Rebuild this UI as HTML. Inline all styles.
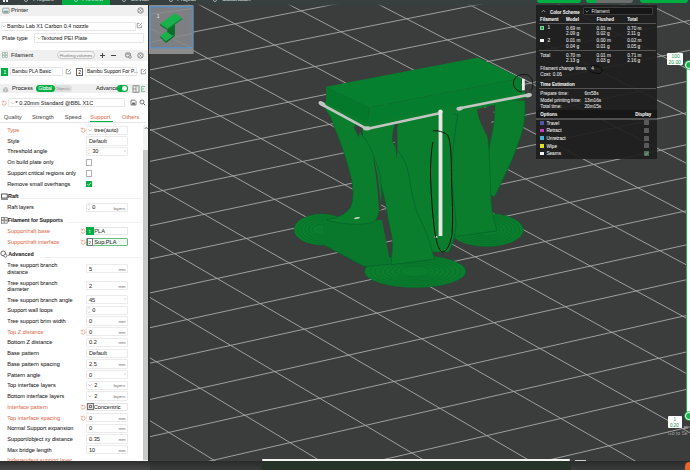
<!DOCTYPE html>
<html><head><meta charset="utf-8">
<style>
*{margin:0;padding:0;box-sizing:border-box}
html,body{width:690px;height:470px;overflow:hidden;background:#3b3c3c;font-family:"Liberation Sans",sans-serif}
.a{position:absolute;white-space:nowrap;-webkit-text-stroke:0.15px currentColor}
#vp{position:absolute;left:0;top:0}
</style></head><body>
<svg id="vp" width="690" height="470" viewBox="0 0 690 470">
<defs><linearGradient id="topg" x1="0" y1="0" x2="0" y2="1"><stop offset="0" stop-color="#3e4a4a"/><stop offset="1" stop-color="#3b3c3c"/></linearGradient></defs>
<rect x="0" y="0" width="690" height="470" fill="#3b3c3c"/>
<g stroke="#a9aaa9" stroke-width="0.9" fill="none">
<line x1="-1154.1" y1="9.5" x2="68.1" y2="883.2"/>
<line x1="-1081.3" y1="-3.5" x2="155.1" y2="860.8"/>
<line x1="-1009.3" y1="-16.3" x2="241.1" y2="838.7"/>
<line x1="-937.9" y1="-28.9" x2="325.9" y2="816.9"/>
<line x1="-867.2" y1="-41.5" x2="409.7" y2="795.3"/>
<line x1="-797.2" y1="-53.9" x2="492.5" y2="774.1"/>
<line x1="-727.9" y1="-66.3" x2="574.3" y2="753.0"/>
<line x1="-659.2" y1="-78.5" x2="655.0" y2="732.3"/>
<line x1="-591.1" y1="-90.6" x2="734.8" y2="711.8"/>
<line x1="-523.7" y1="-102.5" x2="813.6" y2="691.5"/>
<line x1="-457.0" y1="-114.4" x2="891.5" y2="671.5"/>
<line x1="-390.8" y1="-126.2" x2="968.4" y2="651.7"/>
<line x1="-325.2" y1="-137.8" x2="1044.5" y2="632.1"/>
<line x1="-260.3" y1="-149.4" x2="1119.6" y2="612.8"/>
<line x1="-195.9" y1="-160.8" x2="1193.9" y2="593.7"/>
<line x1="-132.2" y1="-172.1" x2="1267.2" y2="574.9"/>
<line x1="-69.0" y1="-183.4" x2="1339.8" y2="556.2"/>
<line x1="-6.4" y1="-194.5" x2="1411.5" y2="537.8"/>
<line x1="55.7" y1="-205.5" x2="1482.4" y2="519.5"/>
<line x1="117.2" y1="-216.4" x2="1552.5" y2="501.5"/>
<line x1="178.1" y1="-227.3" x2="1621.8" y2="483.7"/>
<line x1="238.5" y1="-238.0" x2="1690.3" y2="466.1"/>
<line x1="298.4" y1="-248.7" x2="1758.0" y2="448.7"/>
<line x1="357.8" y1="-259.2" x2="1825.0" y2="431.4"/>
<line x1="416.6" y1="-269.7" x2="1891.3" y2="414.4"/>
<line x1="474.9" y1="-280.0" x2="1956.8" y2="397.6"/>
<line x1="532.7" y1="-290.3" x2="2021.6" y2="380.9"/>
<line x1="-1154.1" y1="9.5" x2="532.7" y2="-290.3"/>
<line x1="-1124.6" y1="30.6" x2="569.9" y2="-273.6"/>
<line x1="-1094.7" y1="52.0" x2="607.5" y2="-256.6"/>
<line x1="-1064.3" y1="73.7" x2="645.6" y2="-239.4"/>
<line x1="-1033.5" y1="95.7" x2="684.2" y2="-222.0"/>
<line x1="-1002.2" y1="118.1" x2="723.4" y2="-204.4"/>
<line x1="-970.4" y1="140.8" x2="763.0" y2="-186.5"/>
<line x1="-938.1" y1="163.9" x2="803.2" y2="-168.4"/>
<line x1="-905.3" y1="187.3" x2="844.0" y2="-150.0"/>
<line x1="-872.1" y1="211.1" x2="885.3" y2="-131.4"/>
<line x1="-838.3" y1="235.3" x2="927.2" y2="-112.5"/>
<line x1="-803.9" y1="259.8" x2="969.7" y2="-93.3"/>
<line x1="-769.0" y1="284.8" x2="1012.7" y2="-73.9"/>
<line x1="-733.6" y1="310.1" x2="1056.4" y2="-54.2"/>
<line x1="-697.6" y1="335.8" x2="1100.7" y2="-34.3"/>
<line x1="-660.9" y1="362.0" x2="1145.6" y2="-14.0"/>
<line x1="-623.7" y1="388.6" x2="1191.2" y2="6.5"/>
<line x1="-585.9" y1="415.7" x2="1237.4" y2="27.4"/>
<line x1="-547.4" y1="443.2" x2="1284.3" y2="48.5"/>
<line x1="-508.3" y1="471.2" x2="1332.0" y2="70.0"/>
<line x1="-468.5" y1="499.6" x2="1380.3" y2="91.8"/>
<line x1="-428.0" y1="528.5" x2="1429.3" y2="113.9"/>
<line x1="-386.8" y1="558.0" x2="1479.1" y2="136.3"/>
<line x1="-344.9" y1="587.9" x2="1529.6" y2="159.1"/>
<line x1="-302.3" y1="618.4" x2="1580.9" y2="182.2"/>
<line x1="-258.9" y1="649.4" x2="1633.0" y2="205.7"/>
<line x1="-214.7" y1="681.0" x2="1686.0" y2="229.6"/>
<line x1="-169.7" y1="713.2" x2="1739.7" y2="253.8"/>
<line x1="-123.9" y1="745.9" x2="1794.3" y2="278.4"/>
<line x1="-77.2" y1="779.3" x2="1849.8" y2="303.4"/>
<line x1="-29.7" y1="813.3" x2="1906.1" y2="328.8"/>
<line x1="18.8" y1="847.9" x2="1963.4" y2="354.7"/>
<line x1="68.1" y1="883.2" x2="2021.6" y2="380.9"/>
</g>
<ellipse cx="486.7" cy="230" rx="36.7" ry="16.5" fill="#0a7e2d"/>
<ellipse cx="486.7" cy="230" rx="12.8" ry="5.8" fill="none" stroke="#06692a" stroke-width="0.55"/><ellipse cx="486.7" cy="230" rx="16.8" ry="7.6" fill="none" stroke="#06692a" stroke-width="0.55"/><ellipse cx="486.7" cy="230" rx="20.8" ry="9.3" fill="none" stroke="#06692a" stroke-width="0.55"/><ellipse cx="486.7" cy="230" rx="24.8" ry="11.1" fill="none" stroke="#06692a" stroke-width="0.55"/><ellipse cx="486.7" cy="230" rx="28.7" ry="12.9" fill="none" stroke="#06692a" stroke-width="0.55"/><ellipse cx="486.7" cy="230" rx="32.7" ry="14.7" fill="none" stroke="#06692a" stroke-width="0.55"/><ellipse cx="486.7" cy="230" rx="36.7" ry="16.5" fill="none" stroke="#06692a" stroke-width="0.55"/>
<ellipse cx="322" cy="229.5" rx="28" ry="15.5" fill="#0a7e2d"/>
<ellipse cx="322" cy="229.5" rx="9.8" ry="5.4" fill="none" stroke="#06692a" stroke-width="0.55"/><ellipse cx="322" cy="229.5" rx="13.4" ry="7.4" fill="none" stroke="#06692a" stroke-width="0.55"/><ellipse cx="322" cy="229.5" rx="17.1" ry="9.5" fill="none" stroke="#06692a" stroke-width="0.55"/><ellipse cx="322" cy="229.5" rx="20.7" ry="11.5" fill="none" stroke="#06692a" stroke-width="0.55"/><ellipse cx="322" cy="229.5" rx="24.4" ry="13.5" fill="none" stroke="#06692a" stroke-width="0.55"/><ellipse cx="322" cy="229.5" rx="28.0" ry="15.5" fill="none" stroke="#06692a" stroke-width="0.55"/>
<ellipse cx="415.2" cy="271.4" rx="50.5" ry="16.2" fill="#0a7e2d"/>
<ellipse cx="415.2" cy="271.4" rx="15.1" ry="4.9" fill="none" stroke="#06692a" stroke-width="0.55"/><ellipse cx="415.2" cy="271.4" rx="20.2" ry="6.5" fill="none" stroke="#06692a" stroke-width="0.55"/><ellipse cx="415.2" cy="271.4" rx="25.2" ry="8.1" fill="none" stroke="#06692a" stroke-width="0.55"/><ellipse cx="415.2" cy="271.4" rx="30.3" ry="9.7" fill="none" stroke="#06692a" stroke-width="0.55"/><ellipse cx="415.2" cy="271.4" rx="35.3" ry="11.3" fill="none" stroke="#06692a" stroke-width="0.55"/><ellipse cx="415.2" cy="271.4" rx="40.4" ry="13.0" fill="none" stroke="#06692a" stroke-width="0.55"/><ellipse cx="415.2" cy="271.4" rx="45.4" ry="14.6" fill="none" stroke="#06692a" stroke-width="0.55"/><ellipse cx="415.2" cy="271.4" rx="50.5" ry="16.2" fill="none" stroke="#06692a" stroke-width="0.55"/>
<path d="M525.0 100.5 L524.9 102.2 L524.9 103.8 L524.9 105.4 L525.0 107.1 L525.0 108.9 L525.0 110.8 L525.0 112.8 L524.9 114.9 L524.8 117.1 L524.6 119.5 L524.2 121.9 L523.8 124.4 L523.3 126.9 L522.7 129.4 L522.0 131.9 L521.3 134.4 L520.5 136.9 L519.7 139.4 L518.8 141.9 L517.9 144.3 L517.1 146.7 L516.2 149.1 L515.3 151.4 L514.5 153.6 L513.6 155.9 L512.7 158.1 L511.8 160.3 L510.8 162.5 L509.8 164.6 L508.9 166.7 L508.0 168.7 L507.0 170.7 L506.1 172.5 L505.2 174.4 L504.4 176.1 L503.6 177.8 L502.8 179.4 L502.1 181.1 L501.3 182.6 L500.6 184.2 L499.9 185.7 L499.2 187.2 L498.4 188.7 L497.7 190.2 L497.0 191.7 L496.3 193.3 L495.6 194.9 L494.8 196.4 L483.2 193.6 L483.3 191.8 L483.3 190.2 L483.3 188.5 L483.4 186.8 L483.4 185.1 L483.5 183.4 L483.5 181.7 L483.6 179.9 L483.8 178.1 L483.9 176.2 L484.1 174.2 L484.4 172.2 L484.7 170.1 L485.1 168.0 L485.5 165.8 L485.9 163.6 L486.4 161.5 L486.9 159.3 L487.3 157.1 L487.8 155.0 L488.2 152.8 L488.7 150.7 L489.1 148.6 L489.5 146.4 L489.9 144.1 L490.4 141.8 L490.8 139.4 L491.3 137.0 L491.8 134.6 L492.2 132.2 L492.6 129.9 L493.0 127.6 L493.4 125.4 L493.7 123.4 L494.0 121.4 L494.2 119.6 L494.3 118.0 L494.5 116.5 L494.6 115.0 L494.6 113.5 L494.7 112.0 L494.8 110.4 L494.8 108.8 L494.8 107.1 L494.8 105.3 L494.9 103.4 L494.9 101.4 L495.0 99.5 Z" fill="#0a7e2d" stroke="#06612a" stroke-width="0.7"/>
<path d="M482.0 103.2 L482.5 106.2 L483.0 109.1 L483.6 112.1 L484.1 115.0 L484.7 118.0 L485.2 121.1 L485.8 124.1 L486.3 127.1 L486.8 130.2 L487.2 133.3 L487.6 136.4 L488.0 139.5 L488.3 142.6 L488.6 145.7 L488.8 148.8 L489.0 151.8 L489.1 154.8 L489.2 157.7 L489.4 160.6 L489.5 163.5 L489.6 166.3 L489.7 169.1 L489.8 171.9 L490.0 174.8 L490.2 177.7 L490.3 180.8 L490.4 183.9 L490.6 187.0 L490.7 190.2 L490.8 193.3 L490.9 196.3 L491.1 199.3 L491.3 202.1 L491.5 204.8 L491.7 207.3 L492.0 209.6 L492.2 211.6 L492.6 213.5 L492.9 215.2 L493.3 216.8 L493.7 218.4 L494.1 220.0 L494.5 221.6 L494.9 223.3 L495.4 225.1 L495.9 226.9 L496.3 228.9 L496.8 230.9 L451.2 237.1 L451.1 235.3 L451.1 233.7 L451.0 232.0 L450.9 230.3 L450.8 228.5 L450.7 226.6 L450.6 224.6 L450.4 222.4 L450.3 220.1 L450.2 217.7 L450.1 215.1 L450.0 212.4 L450.0 209.6 L449.9 206.7 L449.9 203.7 L449.9 200.6 L449.8 197.4 L449.8 194.2 L449.8 191.0 L449.8 187.8 L449.8 184.6 L449.9 181.4 L449.9 178.3 L450.0 175.2 L450.1 172.2 L450.2 169.1 L450.4 166.1 L450.5 163.1 L450.7 160.2 L450.9 157.3 L451.1 154.4 L451.3 151.6 L451.5 148.8 L451.6 146.0 L451.8 143.3 L452.0 140.5 L452.2 137.7 L452.4 134.8 L452.5 131.9 L452.7 129.0 L452.9 126.0 L453.0 123.1 L453.2 120.1 L453.4 117.0 L453.5 114.0 L453.7 110.9 L453.9 107.9 L454.0 104.8 Z" fill="#0a7e2d" stroke="#06612a" stroke-width="0.7"/>
<path d="M457.6 114.5 L457.2 118.1 L456.6 121.8 L456.1 125.5 L455.6 128.9 L455.1 132.2 L454.7 135.4 L454.3 138.3 L454.0 141.0 L453.7 143.6 L453.4 145.9 L453.2 148.0 L453.0 150.0 L452.8 152.0 L452.6 154.2 L452.4 156.6 L452.2 159.1 L452.1 161.9 L452.1 164.7 L452.0 167.8 L452.1 171.0 L452.2 174.3 L452.3 177.7 L452.5 181.3 L452.6 184.8 L452.8 188.0 L453.0 191.1 L453.3 194.5 L453.6 197.9 L454.0 201.4 L454.4 204.9 L454.8 208.5 L455.2 212.0 L455.5 215.5 L455.7 219.0 L455.9 222.4 L455.9 225.7 L455.7 228.9 L455.4 231.8 L454.9 234.6 L454.4 237.1 L453.8 239.4 L453.1 241.6 L452.4 243.5 L451.7 245.4 L451.0 247.1 L450.3 248.7 L449.6 250.3 L449.0 252.1 L427.0 251.9 L426.4 249.8 L425.9 247.6 L425.4 245.6 L424.9 243.7 L424.4 242.0 L423.9 240.3 L423.3 238.7 L422.8 237.1 L422.2 235.6 L421.5 233.9 L420.9 232.2 L420.1 230.3 L419.4 228.2 L418.5 225.8 L417.5 223.1 L416.5 220.2 L415.4 217.2 L414.3 214.0 L413.2 210.6 L412.0 207.2 L410.8 203.7 L409.6 200.2 L408.5 196.6 L407.4 193.2 L406.3 190.2 L405.2 187.3 L404.0 184.3 L402.7 181.1 L401.5 177.8 L400.2 174.4 L399.0 170.8 L397.8 167.0 L396.8 163.0 L396.0 158.9 L395.4 154.5 L395.0 150.0 L394.9 145.4 L395.2 140.9 L395.6 136.6 L396.2 132.4 L397.0 128.5 L397.8 124.8 L398.7 121.2 L399.5 117.8 L400.3 114.6 L401.1 111.5 L401.8 108.6 L402.4 105.5 Z" fill="#0a7e2d" stroke="#06612a" stroke-width="0.7"/>
<path d="M396.0 115.7 L395.7 118.2 L395.3 121.0 L394.8 123.5 L394.4 126.0 L393.9 128.2 L393.4 130.4 L393.0 132.4 L392.7 134.3 L392.5 136.0 L392.4 137.6 L392.4 139.1 L392.5 140.4 L392.8 141.7 L393.3 143.0 L394.1 144.5 L395.1 146.2 L396.2 148.0 L397.5 149.9 L398.9 151.9 L400.4 154.1 L401.9 156.5 L403.4 159.0 L404.8 161.8 L406.0 164.6 L407.0 167.4 L407.7 170.0 L408.4 172.6 L408.9 175.0 L409.3 177.5 L409.7 179.8 L410.0 182.0 L410.3 184.2 L410.6 186.3 L410.9 188.2 L411.3 190.1 L411.7 191.9 L412.1 193.8 L412.6 195.8 L413.0 197.7 L413.5 199.6 L413.9 201.4 L414.4 203.1 L414.8 204.8 L415.3 206.5 L415.8 208.2 L416.3 209.8 L416.9 211.5 L417.5 213.1 L418.1 214.7 L418.8 216.3 L419.5 217.9 L420.4 219.7 L421.2 221.5 L422.1 223.4 L423.0 225.3 L424.0 227.3 L424.9 229.4 L425.8 231.5 L426.7 233.8 L427.6 236.1 L428.3 238.3 L429.1 240.5 L429.7 242.7 L430.4 244.8 L431.0 246.8 L431.6 248.8 L432.1 250.7 L432.7 252.5 L433.2 254.2 L433.7 255.9 L434.3 257.5 L434.8 259.2 L391.2 264.8 L391.3 262.8 L391.4 260.8 L391.5 258.8 L391.6 256.9 L391.8 255.1 L391.9 253.3 L392.1 251.7 L392.2 250.0 L392.3 248.4 L392.4 246.9 L392.4 245.4 L392.4 243.9 L392.4 242.5 L392.3 240.9 L392.1 239.2 L391.8 237.4 L391.5 235.6 L391.1 233.6 L390.7 231.6 L390.3 229.6 L389.9 227.5 L389.4 225.3 L388.9 223.1 L388.5 220.9 L388.1 218.8 L387.8 216.8 L387.5 214.8 L387.1 212.9 L386.8 211.0 L386.5 209.1 L386.2 207.3 L385.9 205.5 L385.5 203.7 L385.2 201.9 L384.8 200.0 L384.3 198.1 L383.9 196.0 L383.3 193.8 L382.8 191.7 L382.3 189.7 L381.8 187.7 L381.3 185.7 L380.8 183.8 L380.2 182.0 L379.7 180.2 L379.1 178.5 L378.5 176.9 L378.0 175.4 L377.5 174.0 L376.8 172.5 L376.0 170.8 L375.1 168.8 L374.0 166.7 L372.9 164.5 L371.6 162.1 L370.3 159.5 L369.0 156.8 L367.8 153.9 L366.5 150.8 L365.5 147.6 L364.6 144.4 L363.9 141.3 L363.3 138.3 L362.8 135.4 L362.4 132.6 L362.1 129.9 L361.7 127.3 L361.4 124.9 L361.1 122.6 L360.8 120.4 L360.4 118.4 L360.0 116.3 Z" fill="#0a7e2d" stroke="#06612a" stroke-width="0.7"/>
<path d="M323.0 222.0 L382.0 220.0 L390.6 264.1 L364.5 266.7 L323.0 244.5 Z" fill="#0a782c" />
<path d="M323 244.5 L364.5 266.7 L390.6 264.1" fill="none" stroke="#06612a" stroke-width="0.7"/>
<path d="M324.0 104.0 C320.8 104.0 328.8 113.0 331.0 118.0 C333.2 123.0 335.0 128.7 337.0 134.0 C339.0 139.3 341.2 144.7 343.0 150.0 C344.8 155.3 346.4 160.2 348.0 166.0 C349.6 171.8 351.8 179.3 352.5 185.0 C353.2 190.7 353.2 195.8 352.5 200.0 C351.8 204.2 350.9 207.2 348.5 210.0 C346.1 212.8 341.6 215.3 338.0 217.0 C334.4 218.7 325.0 218.8 327.0 220.0 C329.0 221.2 342.3 223.7 350.0 224.0 C357.7 224.3 368.2 224.2 373.0 222.0 C377.8 219.8 377.6 215.2 379.0 211.0 C380.4 206.8 381.3 203.0 381.5 197.0 C381.7 191.0 381.1 181.2 380.0 175.0 C378.9 168.8 376.7 164.8 375.0 160.0 C373.3 155.2 371.8 150.2 369.6 146.0 C367.4 141.8 364.3 138.3 362.0 135.0 C359.7 131.7 358.0 128.8 356.0 126.0 C354.0 123.2 355.3 121.7 350.0 118.0 C344.7 114.3 327.2 104.0 324.0 104.0 Z" fill="#0a7e2d" stroke="#06612a" stroke-width="0.7"/>
<path d="M353.6 126.2 L360.6 127.4 L358.7 137.3 Z" fill="#3b3c3c" />
<path d="M393.6 129.5 L397.2 129 C397.5 140 397.4 150 397 159.6 C395.8 150 394.6 140 393.6 129.5 Z" fill="#3b3c3c" />
<path d="M373 157 C376 165 379 180 381.5 210 L379 210 C378 190 375.5 170 373 157 Z" fill="#3b3c3c" />
<path d="M477 109 L494.8 106 C492 118 490 128 488.4 138.5 C484 130 478 120 477 109 Z" fill="#3b3c3c" />
<path d="M321.0 103.0 L364.5 129.0 L440.0 117.0 L458.0 113.0 L530.0 97.0 L521.7 90.0 L368.7 122.0 L326.0 102.0 Z" fill="#0a7e2d" />
<path d="M326.0 86.8 L368.7 107.5 L368.7 123.5 L326.0 103.0 Z" fill="#04792c" />
<path d="M368.7 107.5 L521.0 78.2 L521.7 91.5 L368.7 123.5 Z" fill="#057d2e" />
<path d="M326.0 86.8 L478.0 57.4 L521.0 78.2 L368.7 107.5 Z" fill="#05802e" />
<path d="M321 104 L364.5 127.6 Q367 128.8 370 128.2 L439.5 113.2" fill="none" stroke="#c2c6c2" stroke-width="2.6" stroke-linejoin="round" stroke-linecap="round"/>
<path d="M458.5 108.5 L529.5 94.6" fill="none" stroke="#c2c6c2" stroke-width="2.6" stroke-linecap="round"/>
<ellipse cx="322" cy="103.8" rx="3.8" ry="2.1" fill="#c2c6c2" transform="rotate(30 322 103.8)"/>
<ellipse cx="367" cy="128.3" rx="4" ry="2.1" fill="#c2c6c2" transform="rotate(-5 367 128.3)"/>
<ellipse cx="459.6" cy="108.6" rx="3.2" ry="2" fill="#c2c6c2" transform="rotate(-12 459.6 108.6)"/>
<ellipse cx="528.5" cy="95.2" rx="3.4" ry="2.1" fill="#c2c6c2" transform="rotate(-10 528.5 95.2)"/>
<rect x="438.6" y="111" width="3.8" height="125" fill="#e6e8e6"/>
<circle cx="440.5" cy="111.6" r="2.1" fill="#e6e8e6"/>
<rect x="522" y="78.8" width="2.8" height="11.5" fill="#eceeec"/>
<ellipse cx="436" cy="237" rx="1.6" ry="1" fill="#e8eae8"/>
<ellipse cx="357" cy="218" rx="3" ry="0.7" fill="#d8e8d8" transform="rotate(-12 357 218)"/>
<path d="M433 130.7 C438 130.5 443 131.5 447.5 135 C451 140 451.5 160 451.5 180 C452 200 453.5 215 452 235 C450 245 447 251 442.4 252.2 C438 250 436 240 434.5 230 C432 210 431 190 430.5 175 C430.5 160 431.5 148 433 142" fill="none" stroke="#111" stroke-width="1"/>
<path d="M530.5 91 C534 88 534 78 528 75 C522 73 514 76 513.5 82 C513 88 517 91 522 92" fill="none" stroke="#111" stroke-width="0.9"/>
</svg>
<div class="a" style="left:148.0px;top:5.0px;width:2.0px;height:456.0px;background:#2a2b2b;"></div>
<div class="a" style="left:0.0px;top:0.0px;width:690.0px;height:6.5px;background:linear-gradient(#35403f 0%, #35403f 55%, rgba(59,60,60,0) 100%);"></div>
<div class="a" style="left:62.0px;top:0.0px;width:48.2px;height:4.6px;background:#00ae42;"></div>
<div class="a" style="left:0.0px;top:5.0px;width:148.0px;height:456.0px;background:#ffffff;"></div>
<div class="a" style="left:3.0px;top:0.0px;width:2.0px;height:2.2px;background:#eeeeee;"></div>
<div class="a" style="left:6.0px;top:0.0px;width:2.0px;height:2.2px;background:#eeeeee;"></div>
<div class="a" style="left:33px;top:-3.7px;font-size:6px;line-height:6px;color:#dfe3e3;opacity:.8">Prepare</div>
<div class="a" style="left:82px;top:-3.7px;font-size:6px;line-height:6px;color:#dfe3e3;opacity:.8">Preview</div>
<div class="a" style="left:131px;top:-3.7px;font-size:6px;line-height:6px;color:#dfe3e3;opacity:.8">Device</div>
<div class="a" style="left:177px;top:-3.7px;font-size:6px;line-height:6px;color:#dfe3e3;opacity:.8">Project</div>
<div class="a" style="left:222px;top:-3.7px;font-size:6px;line-height:6px;color:#dfe3e3;opacity:.8">Calibration</div>
<div class="a" style="left:23.5px;top:-3px;width:4.5px;height:4.5px;border:0.8px solid #cfd3d3;border-radius:50%;opacity:.7"></div>
<div class="a" style="left:73.5px;top:-3px;width:4.5px;height:4.5px;border:0.8px solid #cfd3d3;border-radius:50%;opacity:.7"></div>
<div class="a" style="left:121.5px;top:-3px;width:4.5px;height:4.5px;border:0.8px solid #cfd3d3;border-radius:50%;opacity:.7"></div>
<div class="a" style="left:168.5px;top:-3px;width:4.5px;height:4.5px;border:0.8px solid #cfd3d3;border-radius:50%;opacity:.7"></div>
<div class="a" style="left:212.5px;top:-3px;width:4.5px;height:4.5px;border:0.8px solid #cfd3d3;border-radius:50%;opacity:.7"></div>
<div class="a" style="left:537.0px;top:0.0px;width:44.0px;height:3.3px;background:#00ae42;border-radius:0 0 3px 3px"></div>
<div class="a" style="left:586.0px;top:0.0px;width:10.0px;height:3.3px;background:#00ae42;border-radius:0 0 0 3px"></div>
<div class="a" style="left:596.0px;top:0.0px;width:37.0px;height:3.3px;background:#6c6e6e;border-radius:0 0 3px 0"></div>
<div class="a" style="left:640.0px;top:0.0px;width:48.0px;height:3.3px;background:#00ae42;border-radius:0 0 3px 3px"></div>
<div class="a" style="left:0.0px;top:5.0px;width:148.0px;height:10.6px;background:#f0f0f0;"></div>
<svg class="a" style="left:1.5px;top:7px" width="8" height="7" viewBox="0 0 8 7"><rect x="0.6" y="1.2" width="6.6" height="5" rx="0.8" fill="none" stroke="#8aa39a" stroke-width="0.9"/><rect x="1.5" y="3.6" width="4.8" height="2.2" fill="#8aa39a"/></svg>
<div class="a" style="left:11.0px;top:8.06px;font-size:5.8px;line-height:5.8px;color:#333;font-weight:normal;-webkit-text-stroke:0.06px #333;">Printer</div>
<svg class="a" style="left:136.5px;top:6.6px" width="7" height="7" viewBox="0 0 7 7"><circle cx="3.5" cy="3.5" r="2.7" fill="none" stroke="#6a6a6a" stroke-width="0.8"/><path d="M2.4 2.4L4.6 4.6M4.6 2.4L2.4 4.6" stroke="#6a6a6a" stroke-width="0.7"/></svg>
<div class="a" style="left:1.0px;top:21.5px;width:134.6px;height:9.1px;background:#fff;border:0.8px solid #e6e6e6;border-radius:1px;"></div>
<svg class="a" style="left:2.4px;top:24.93px" width="4.4" height="2.5" viewBox="-0.5 -0.5 4.4 2.5"><path d="M0 0L1.70 1.53L3.40 0" fill="none" stroke="#8a8a8a" stroke-width="0.6"/></svg>
<div class="a" style="left:7.0px;top:24.03px;font-size:5.45px;line-height:5.45px;color:#333;font-weight:normal;-webkit-text-stroke:0.06px #333;">Bambu Lab X1 Carbon 0.4 nozzle</div>
<svg class="a" style="left:136px;top:22px" width="7" height="7" viewBox="0 0 7 7"><path d="M5.6 3.6V5.8H1.2V1.4H3.4" fill="none" stroke="#7a7a7a" stroke-width="0.7"/><path d="M3.2 3.8L5.8 1.2" stroke="#7a7a7a" stroke-width="0.7"/></svg>
<div class="a" style="left:2.0px;top:35.66px;font-size:5.8px;line-height:5.8px;color:#333;font-weight:normal;-webkit-text-stroke:0.06px #333;">Plate type</div>
<div class="a" style="left:34.0px;top:32.6px;width:110.1px;height:10.4px;background:#fff;border:0.8px solid #e6e6e6;border-radius:1px;"></div>
<svg class="a" style="left:37.0px;top:36.73px" width="4.4" height="2.5" viewBox="-0.5 -0.5 4.4 2.5"><path d="M0 0L1.70 1.53L3.40 0" fill="none" stroke="#8a8a8a" stroke-width="0.6"/></svg>
<div class="a" style="left:41.0px;top:35.76px;font-size:5.6px;line-height:5.6px;color:#333;font-weight:normal;-webkit-text-stroke:0.06px #333;">Textured PEI Plate</div>
<div class="a" style="left:0.0px;top:49.8px;width:148.0px;height:10.9px;background:#f0f0f0;"></div>
<svg class="a" style="left:2px;top:52px" width="6" height="6" viewBox="0 0 6 6"><rect x="0.4" y="0.4" width="2.2" height="2.2" fill="none" stroke="#9ab5a8" stroke-width="0.7"/><rect x="3.4" y="0.4" width="2.2" height="2.2" fill="none" stroke="#9ab5a8" stroke-width="0.7"/><rect x="0.4" y="3.4" width="2.2" height="2.2" fill="none" stroke="#9ab5a8" stroke-width="0.7"/><rect x="3.4" y="3.4" width="2.2" height="2.2" fill="none" stroke="#9ab5a8" stroke-width="0.7"/></svg>
<div class="a" style="left:11.0px;top:52.86px;font-size:5.8px;line-height:5.8px;color:#333;font-weight:normal;-webkit-text-stroke:0.06px #333;">Filament</div>
<div class="a" style="left:57.0px;top:51.3px;width:38.0px;height:7.3px;background:#f4f4f4;border:0.8px solid #c9c9c9;border-radius:4px;"></div>
<div class="a" style="left:59.8px;top:53.67px;font-size:4.15px;line-height:4.15px;color:#8a8a8a;font-weight:normal;-webkit-text-stroke:0.06px #8a8a8a;">Flushing volumes</div>
<div class="a" style="left:99.8px;top:54.7px;width:5.0px;height:0.6px;background:#444;"></div>
<div class="a" style="left:102.0px;top:52.5px;width:0.6px;height:5.0px;background:#444;"></div>
<div class="a" style="left:111.3px;top:54.7px;width:4.5px;height:0.6px;background:#444;"></div>
<svg class="a" style="left:125px;top:51.5px" width="7" height="7" viewBox="0 0 7 7"><rect x="0.7" y="1" width="4.6" height="4" rx="0.6" fill="none" stroke="#555" stroke-width="0.7"/><path d="M1.6 2.3H4.3" stroke="#555" stroke-width="0.6"/><circle cx="5" cy="5" r="1.3" fill="#fff" stroke="#555" stroke-width="0.6"/></svg>
<svg class="a" style="left:136.5px;top:51.6px" width="7" height="7" viewBox="0 0 7 7"><circle cx="3.5" cy="3.5" r="2.7" fill="none" stroke="#6a6a6a" stroke-width="0.8"/><path d="M2.4 2.4L4.6 4.6M4.6 2.4L2.4 4.6" stroke="#6a6a6a" stroke-width="0.7"/></svg>
<div class="a" style="left:1.0px;top:67.5px;width:7.3px;height:8.1px;background:#00ae42;"></div>
<div class="a" style="left:3.4px;top:69.75px;font-size:5px;line-height:5px;color:#fff;font-weight:normal;-webkit-text-stroke:0.06px #fff;">1</div>
<div class="a" style="left:10.0px;top:67.0px;width:52.5px;height:9.0px;background:#fff;border:0.8px solid #e6e6e6;border-radius:1px;"></div>
<div class="a" style="left:12.0px;top:69.80px;font-size:4.9px;line-height:4.9px;color:#333;font-weight:normal;-webkit-text-stroke:0.06px #333;">Bambu PLA Basic</div>
<svg class="a" style="left:64.5px;top:68px" width="7" height="7" viewBox="0 0 7 7"><path d="M5.6 3.6V5.8H1.2V1.4H3.4" fill="none" stroke="#7a7a7a" stroke-width="0.7"/><path d="M3.2 3.8L5.8 1.2" stroke="#7a7a7a" stroke-width="0.7"/></svg>
<div class="a" style="left:76.0px;top:67.6px;width:7.2px;height:8.0px;background:#fff;border:0.6px solid #666;border-radius:0.5px;"></div>
<div class="a" style="left:78.3px;top:69.85px;font-size:5px;line-height:5px;color:#222;font-weight:normal;-webkit-text-stroke:0.06px #222;">2</div>
<div class="a" style="left:85.0px;top:67.0px;width:52.0px;height:9.0px;background:#fff;border:0.8px solid #e6e6e6;border-radius:1px;"></div>
<div class="a" style="left:87.0px;top:69.80px;font-size:4.9px;line-height:4.9px;color:#333;font-weight:normal;-webkit-text-stroke:0.06px #333;">Bambu Support For P...</div>
<svg class="a" style="left:139.5px;top:68px" width="7" height="7" viewBox="0 0 7 7"><path d="M5.6 3.6V5.8H1.2V1.4H3.4" fill="none" stroke="#7a7a7a" stroke-width="0.7"/><path d="M3.2 3.8L5.8 1.2" stroke="#7a7a7a" stroke-width="0.7"/></svg>
<div class="a" style="left:0.0px;top:84.0px;width:148.0px;height:9.2px;background:#f0f0f0;"></div>
<svg class="a" style="left:2px;top:85.5px" width="7" height="7" viewBox="0 0 7 7"><path d="M1 2.2L3.6 1L6.2 2.2V5.4L3.6 6.6L1 5.4Z" fill="#b8bcbb"/><path d="M1 2.2L3.6 3.4L6.2 2.2M3.6 3.4V6.6" fill="none" stroke="#f0f0f0" stroke-width="0.5"/></svg>
<div class="a" style="left:12.0px;top:86.46px;font-size:5.8px;line-height:5.8px;color:#333;font-weight:normal;-webkit-text-stroke:0.06px #333;">Process</div>
<div class="a" style="left:50.0px;top:85.0px;width:22.3px;height:7.1px;background:#dedede;border-radius:3.5px"></div>
<div class="a" style="left:35.9px;top:85.0px;width:19.0px;height:7.1px;background:#00ae42;border-radius:3.5px"></div>
<div class="a" style="left:38.6px;top:87.05px;font-size:4.6px;line-height:4.6px;color:#fff;font-weight:normal;-webkit-text-stroke:0.06px #fff;">Global</div>
<div class="a" style="left:55.3px;top:87.44px;font-size:4.2px;line-height:4.2px;color:#9a9a9a;font-weight:normal;-webkit-text-stroke:0.06px #9a9a9a;">Objects</div>
<div class="a" style="left:96.0px;top:86.31px;font-size:5.7px;line-height:5.7px;color:#333;font-weight:normal;-webkit-text-stroke:0.06px #333;">Advance</div>
<div class="a" style="left:117.0px;top:85.4px;width:11.3px;height:6.4px;background:#00ae42;border-radius:3.2px"></div>
<div class="a" style="left:122.3px;top:86.3px;width:4.8px;height:4.8px;border-radius:50%;background:#fff"></div>
<svg class="a" style="left:132px;top:85px" width="16" height="8" viewBox="0 0 16 8"><rect x="1" y="0.8" width="6" height="6.4" fill="none" stroke="#666" stroke-width="0.7"/><path d="M4 0.8V7.2M1 4H4" stroke="#666" stroke-width="0.6"/><path d="M10 1.5H13M10 4H12M10 6.5H13M9.5 1V7" stroke="#4db37a" stroke-width="0.7"/></svg>
<svg class="a" style="left:0.5px;top:99.5px" width="6" height="6" viewBox="0 0 6 6"><path d="M1.2 3.4A2 2 0 1 0 2 1.6" fill="none" stroke="#e98a73" stroke-width="0.7"/><path d="M0.6 1.2L2.2 1.4L2 3" fill="none" stroke="#e98a73" stroke-width="0.6"/></svg>
<div class="a" style="left:8.2px;top:98.1px;width:116.8px;height:9.2px;background:#fff;border:0.8px solid #e6e6e6;border-radius:1px;"></div>
<svg class="a" style="left:11.0px;top:101.73px" width="4.4" height="2.5" viewBox="-0.5 -0.5 4.4 2.5"><path d="M0 0L1.70 1.53L3.40 0" fill="none" stroke="#aaa" stroke-width="0.6"/></svg>
<div class="a" style="left:15.6px;top:100.68px;font-size:5.55px;line-height:5.55px;color:#333;font-weight:normal;-webkit-text-stroke:0.06px #333;">* 0.20mm Standard @BBL X1C</div>
<svg class="a" style="left:129.5px;top:99.3px" width="7" height="7" viewBox="0 0 7 7"><path d="M1 1.2H4.8L6 2.4V6H1Z" fill="none" stroke="#555" stroke-width="0.75"/><rect x="2.2" y="3.6" width="2.6" height="2" fill="#555"/></svg>
<svg class="a" style="left:138.5px;top:99.3px" width="7" height="7" viewBox="0 0 7 7"><circle cx="3" cy="3" r="2" fill="none" stroke="#555" stroke-width="0.8"/><path d="M4.5 4.5L6.2 6.2" stroke="#555" stroke-width="0.9"/></svg>
<div class="a" style="left:3.8px;top:115.18px;font-size:5.75px;line-height:5.75px;color:#555;font-weight:normal;-webkit-text-stroke:0.06px #555;">Quality</div>
<div class="a" style="left:32.0px;top:115.18px;font-size:5.75px;line-height:5.75px;color:#555;font-weight:normal;-webkit-text-stroke:0.06px #555;">Strength</div>
<div class="a" style="left:64.8px;top:115.18px;font-size:5.75px;line-height:5.75px;color:#555;font-weight:normal;-webkit-text-stroke:0.06px #555;">Speed</div>
<div class="a" style="left:90.3px;top:115.18px;font-size:5.75px;line-height:5.75px;color:#dc7a5c;font-weight:normal;-webkit-text-stroke:0.06px #dc7a5c;">Support</div>
<div class="a" style="left:122.0px;top:115.18px;font-size:5.75px;line-height:5.75px;color:#dc7a5c;font-weight:normal;-webkit-text-stroke:0.06px #dc7a5c;">Others</div>
<div class="a" style="left:0.0px;top:122.4px;width:146.0px;height:0.8px;background:#e6e6e6;"></div>
<div class="a" style="left:90.0px;top:121.0px;width:22.5px;height:1.2px;background:#00ae42;"></div>
<div class="a" style="left:143.0px;top:125.0px;width:4.5px;height:336.0px;background:#f2f2f2;"></div>
<div class="a" style="left:143.0px;top:150.0px;width:4.6px;height:310.0px;background:#c9c9c9;"></div>
<svg class="a" style="left:143.6px;top:126.53px" width="4.4" height="2.5" viewBox="-0.5 -0.5 4.4 2.5"><path d="M0 1.53L1.70 0L3.40 1.53" fill="none" stroke="#333" stroke-width="0.7"/></svg>
<div class="a" style="left:7.2px;top:128.16px;font-size:5.6px;line-height:5.6px;color:#dc7a5c;font-weight:normal;-webkit-text-stroke:0.06px #dc7a5c;">Type</div><svg class="a" style="left:79.5px;top:127.19999999999999px" width="6" height="6" viewBox="0 0 6 6"><path d="M1.2 3.4A2 2 0 1 0 2 1.6" fill="none" stroke="#e98a73" stroke-width="0.7"/><path d="M0.6 1.2L2.2 1.4L2 3" fill="none" stroke="#e98a73" stroke-width="0.6"/></svg><div class="a" style="left:85.9px;top:125.5px;width:42.6px;height:9.4px;background:#fff;border:0.8px solid #ebebeb;border-radius:1px;"></div><svg class="a" style="left:88.2px;top:129.28px" width="4.2" height="2.4" viewBox="-0.5 -0.5 4.2 2.4"><path d="M0 0L1.60 1.44L3.20 0" fill="none" stroke="#999" stroke-width="0.6"/></svg><div class="a" style="left:94.2px;top:128.16px;font-size:5.6px;line-height:5.6px;color:#333;font-weight:normal;-webkit-text-stroke:0.06px #333;">tree(auto)</div>
<div class="a" style="left:7.2px;top:138.96px;font-size:5.6px;line-height:5.6px;color:#2a2a2a;font-weight:normal;-webkit-text-stroke:0.06px #2a2a2a;">Style</div><div class="a" style="left:85.9px;top:136.3px;width:42.6px;height:9.4px;background:#fff;border:0.8px solid #ebebeb;border-radius:1px;"></div><div class="a" style="left:89.0px;top:138.96px;font-size:5.6px;line-height:5.6px;color:#333;font-weight:normal;-webkit-text-stroke:0.06px #333;">Default</div>
<div class="a" style="left:7.2px;top:149.46px;font-size:5.6px;line-height:5.6px;color:#2a2a2a;font-weight:normal;-webkit-text-stroke:0.06px #2a2a2a;">Threshold angle</div><div class="a" style="left:85.9px;top:146.8px;width:42.6px;height:9.4px;background:#fff;border:0.8px solid #ebebeb;border-radius:1px;"></div><svg class="a" style="left:87.4px;top:148.57px" width="3.8" height="2.3" viewBox="-0.5 -0.5 3.8 2.3"><path d="M0 1.26L1.40 0L2.80 1.26" fill="none" stroke="#aaa" stroke-width="0.5"/></svg><svg class="a" style="left:87.4px;top:152.27px" width="3.8" height="2.3" viewBox="-0.5 -0.5 3.8 2.3"><path d="M0 0L1.40 1.26L2.80 0" fill="none" stroke="#aaa" stroke-width="0.5"/></svg><div class="a" style="left:92.2px;top:149.46px;font-size:5.6px;line-height:5.6px;color:#333;font-weight:normal;-webkit-text-stroke:0.06px #333;">30</div><div class="a" style="left:124.0px;top:149.54px;font-size:4.2px;line-height:4.2px;color:#888;font-weight:normal;-webkit-text-stroke:0.06px #888;">°</div>
<div class="a" style="left:7.2px;top:160.36px;font-size:5.6px;line-height:5.6px;color:#2a2a2a;font-weight:normal;-webkit-text-stroke:0.06px #2a2a2a;">On build plate only</div><div class="a" style="left:85.9px;top:159.3px;width:6.4px;height:6.4px;background:#fff;border:0.7px solid #b0b0b0;border-radius:0.6px;"></div>
<div class="a" style="left:7.2px;top:171.26px;font-size:5.6px;line-height:5.6px;color:#2a2a2a;font-weight:normal;-webkit-text-stroke:0.06px #2a2a2a;">Support critical regions only</div><div class="a" style="left:85.9px;top:170.2px;width:6.4px;height:6.4px;background:#fff;border:0.7px solid #b0b0b0;border-radius:0.6px;"></div>
<div class="a" style="left:7.2px;top:181.96px;font-size:5.6px;line-height:5.6px;color:#2a2a2a;font-weight:normal;-webkit-text-stroke:0.06px #2a2a2a;">Remove small overhangs</div><div class="a" style="left:85.9px;top:180.9px;width:6.4px;height:6.4px;background:#00ae42;border-radius:0.6px"></div><svg class="a" style="left:86px;top:181px" width="6" height="6" viewBox="0 0 6 6"><path d="M1.3 3.1L2.6 4.4L4.9 1.8" fill="none" stroke="#fff" stroke-width="0.8"/></svg>
<svg class="a" style="left:0.5px;top:192.6px" width="7" height="7" viewBox="0 0 7 7"><rect x="0.6" y="1" width="5.6" height="4" fill="none" stroke="#333" stroke-width="0.8"/><path d="M0 6.2H7" stroke="#333" stroke-width="0.8"/></svg>
<div class="a" style="left:8.0px;top:194.25px;font-size:5.4px;line-height:5.4px;color:#222;font-weight:bold;-webkit-text-stroke:0.06px #222;">Raft</div>
<div class="a" style="left:20.0px;top:198.3px;width:122.0px;height:0.5px;background:#f0f0f0;"></div>
<div class="a" style="left:7.2px;top:205.36px;font-size:5.6px;line-height:5.6px;color:#2a2a2a;font-weight:normal;-webkit-text-stroke:0.06px #2a2a2a;">Raft layers</div><div class="a" style="left:85.9px;top:202.7px;width:42.6px;height:9.4px;background:#fff;border:0.8px solid #ebebeb;border-radius:1px;"></div><svg class="a" style="left:87.4px;top:204.47px" width="3.8" height="2.3" viewBox="-0.5 -0.5 3.8 2.3"><path d="M0 1.26L1.40 0L2.80 1.26" fill="none" stroke="#aaa" stroke-width="0.5"/></svg><svg class="a" style="left:87.4px;top:208.17px" width="3.8" height="2.3" viewBox="-0.5 -0.5 3.8 2.3"><path d="M0 0L1.40 1.26L2.80 0" fill="none" stroke="#aaa" stroke-width="0.5"/></svg><div class="a" style="left:92.2px;top:205.36px;font-size:5.6px;line-height:5.6px;color:#333;font-weight:normal;-webkit-text-stroke:0.06px #333;">0</div><div class="a" style="left:113.4px;top:206.54px;font-size:4.4px;line-height:4.4px;color:#8a8a8a;font-weight:normal;-webkit-text-stroke:0.06px #8a8a8a;">layers</div>
<svg class="a" style="left:0.5px;top:216.8px" width="7" height="7" viewBox="0 0 7 7"><rect x="0.6" y="0.6" width="2.4" height="2.4" fill="none" stroke="#555" stroke-width="0.6"/><rect x="3.8" y="0.6" width="2.4" height="2.4" fill="none" stroke="#555" stroke-width="0.6"/><rect x="0.6" y="3.8" width="2.4" height="2.4" fill="none" stroke="#555" stroke-width="0.6"/><rect x="3.8" y="3.8" width="2.4" height="2.4" fill="none" stroke="#555" stroke-width="0.6"/></svg>
<div class="a" style="left:7.8px;top:218.00px;font-size:5.3px;line-height:5.3px;color:#222;font-weight:bold;-webkit-text-stroke:0.06px #222;">Filament for Supports</div>
<div class="a" style="left:66.0px;top:222.0px;width:76.0px;height:0.5px;background:#f2f2f2;"></div>
<div class="a" style="left:7.2px;top:228.96px;font-size:5.6px;line-height:5.6px;color:#dc7a5c;font-weight:normal;-webkit-text-stroke:0.06px #dc7a5c;">Support/raft base</div>
<svg class="a" style="left:79.5px;top:228px" width="6" height="6" viewBox="0 0 6 6"><path d="M1.2 3.4A2 2 0 1 0 2 1.6" fill="none" stroke="#e98a73" stroke-width="0.7"/><path d="M0.6 1.2L2.2 1.4L2 3" fill="none" stroke="#e98a73" stroke-width="0.6"/></svg>
<div class="a" style="left:85.9px;top:226.8px;width:42.6px;height:8.4px;background:#fff;border:0.8px solid #e6e6e6;border-radius:1px;"></div>
<div class="a" style="left:86.4px;top:227.3px;width:7.2px;height:7.4px;background:#00ae42;"></div>
<div class="a" style="left:88.6px;top:229.64px;font-size:4.2px;line-height:4.2px;color:#cfe;font-weight:normal;-webkit-text-stroke:0.06px #cfe;">1</div>
<div class="a" style="left:94.3px;top:228.96px;font-size:5.6px;line-height:5.6px;color:#333;font-weight:normal;-webkit-text-stroke:0.06px #333;">PLA</div>
<div class="a" style="left:7.2px;top:239.96px;font-size:5.6px;line-height:5.6px;color:#dc7a5c;font-weight:normal;-webkit-text-stroke:0.06px #dc7a5c;">Support/raft interface</div>
<svg class="a" style="left:79.5px;top:239px" width="6" height="6" viewBox="0 0 6 6"><path d="M1.2 3.4A2 2 0 1 0 2 1.6" fill="none" stroke="#e98a73" stroke-width="0.7"/><path d="M0.6 1.2L2.2 1.4L2 3" fill="none" stroke="#e98a73" stroke-width="0.6"/></svg>
<div class="a" style="left:85.9px;top:237.6px;width:42.6px;height:8.8px;background:#eef7f0;border:0.8px solid #6abf85;border-radius:1px;"></div>
<div class="a" style="left:86.6px;top:238.4px;width:6.8px;height:7.2px;background:#fff;border:0.8px solid #777;border-radius:0.3px;"></div>
<div class="a" style="left:88.6px;top:240.64px;font-size:4.2px;line-height:4.2px;color:#222;font-weight:normal;-webkit-text-stroke:0.06px #222;">2</div>
<div class="a" style="left:94.3px;top:239.96px;font-size:5.6px;line-height:5.6px;color:#333;font-weight:normal;-webkit-text-stroke:0.06px #333;">Sup.PLA</div>
<svg class="a" style="left:0.3px;top:250.4px" width="8" height="8" viewBox="0 0 8 8"><circle cx="3.2" cy="3.4" r="2.4" fill="none" stroke="#444" stroke-width="0.8"/><circle cx="5.4" cy="5.6" r="1.6" fill="#fff" stroke="#444" stroke-width="0.7"/></svg>
<div class="a" style="left:8.3px;top:252.20px;font-size:5.3px;line-height:5.3px;color:#222;font-weight:bold;-webkit-text-stroke:0.06px #222;">Advanced</div>
<div class="a" style="left:40.0px;top:256.5px;width:102.0px;height:0.5px;background:#f2f2f2;"></div>
<div class="a" style="left:7.2px;top:263.16px;font-size:5.6px;line-height:5.6px;color:#2a2a2a;font-weight:normal;-webkit-text-stroke:0.06px #2a2a2a;">Tree support branch</div>
<div class="a" style="left:7.2px;top:269.66px;font-size:5.6px;line-height:5.6px;color:#2a2a2a;font-weight:normal;-webkit-text-stroke:0.06px #2a2a2a;">distance</div>
<div class="a" style="left:85.9px;top:263.9px;width:42.6px;height:9.4px;background:#fff;border:0.8px solid #ebebeb;border-radius:1px;"></div><div class="a" style="left:89.0px;top:266.56px;font-size:5.6px;line-height:5.6px;color:#333;font-weight:normal;-webkit-text-stroke:0.06px #333;">5</div><div class="a" style="left:118.4px;top:267.79px;font-size:4.3px;line-height:4.3px;color:#8a8a8a;font-weight:normal;-webkit-text-stroke:0.06px #8a8a8a;">mm</div>
<div class="a" style="left:7.2px;top:280.56px;font-size:5.6px;line-height:5.6px;color:#2a2a2a;font-weight:normal;-webkit-text-stroke:0.06px #2a2a2a;">Tree support branch</div>
<div class="a" style="left:7.2px;top:286.96px;font-size:5.6px;line-height:5.6px;color:#2a2a2a;font-weight:normal;-webkit-text-stroke:0.06px #2a2a2a;">diameter</div>
<div class="a" style="left:85.9px;top:281.1px;width:42.6px;height:9.4px;background:#fff;border:0.8px solid #ebebeb;border-radius:1px;"></div><div class="a" style="left:89.0px;top:283.76px;font-size:5.6px;line-height:5.6px;color:#333;font-weight:normal;-webkit-text-stroke:0.06px #333;">2</div><div class="a" style="left:118.4px;top:284.99px;font-size:4.3px;line-height:4.3px;color:#8a8a8a;font-weight:normal;-webkit-text-stroke:0.06px #8a8a8a;">mm</div>
<div class="a" style="left:7.2px;top:297.56px;font-size:5.6px;line-height:5.6px;color:#2a2a2a;font-weight:normal;-webkit-text-stroke:0.06px #2a2a2a;">Tree support branch angle</div><div class="a" style="left:85.9px;top:294.9px;width:42.6px;height:9.4px;background:#fff;border:0.8px solid #ebebeb;border-radius:1px;"></div><div class="a" style="left:89.0px;top:297.56px;font-size:5.6px;line-height:5.6px;color:#333;font-weight:normal;-webkit-text-stroke:0.06px #333;">45</div><div class="a" style="left:124.0px;top:297.64px;font-size:4.2px;line-height:4.2px;color:#888;font-weight:normal;-webkit-text-stroke:0.06px #888;">°</div>
<div class="a" style="left:7.2px;top:308.26px;font-size:5.6px;line-height:5.6px;color:#2a2a2a;font-weight:normal;-webkit-text-stroke:0.06px #2a2a2a;">Support wall loops</div><div class="a" style="left:85.9px;top:305.6px;width:42.6px;height:9.4px;background:#fff;border:0.8px solid #ebebeb;border-radius:1px;"></div><svg class="a" style="left:87.4px;top:307.37px" width="3.8" height="2.3" viewBox="-0.5 -0.5 3.8 2.3"><path d="M0 1.26L1.40 0L2.80 1.26" fill="none" stroke="#aaa" stroke-width="0.5"/></svg><svg class="a" style="left:87.4px;top:311.07px" width="3.8" height="2.3" viewBox="-0.5 -0.5 3.8 2.3"><path d="M0 0L1.40 1.26L2.80 0" fill="none" stroke="#aaa" stroke-width="0.5"/></svg><div class="a" style="left:92.2px;top:308.26px;font-size:5.6px;line-height:5.6px;color:#333;font-weight:normal;-webkit-text-stroke:0.06px #333;">0</div>
<div class="a" style="left:7.2px;top:318.96px;font-size:5.6px;line-height:5.6px;color:#2a2a2a;font-weight:normal;-webkit-text-stroke:0.06px #2a2a2a;">Tree support brim width</div><div class="a" style="left:85.9px;top:316.3px;width:42.6px;height:9.4px;background:#fff;border:0.8px solid #ebebeb;border-radius:1px;"></div><div class="a" style="left:89.0px;top:318.96px;font-size:5.6px;line-height:5.6px;color:#333;font-weight:normal;-webkit-text-stroke:0.06px #333;">0</div><div class="a" style="left:118.4px;top:320.19px;font-size:4.3px;line-height:4.3px;color:#8a8a8a;font-weight:normal;-webkit-text-stroke:0.06px #8a8a8a;">mm</div>
<div class="a" style="left:7.2px;top:329.56px;font-size:5.6px;line-height:5.6px;color:#dc7a5c;font-weight:normal;-webkit-text-stroke:0.06px #dc7a5c;">Top Z distance</div><svg class="a" style="left:79.5px;top:328.6px" width="6" height="6" viewBox="0 0 6 6"><path d="M1.2 3.4A2 2 0 1 0 2 1.6" fill="none" stroke="#e98a73" stroke-width="0.7"/><path d="M0.6 1.2L2.2 1.4L2 3" fill="none" stroke="#e98a73" stroke-width="0.6"/></svg><div class="a" style="left:85.9px;top:326.9px;width:42.6px;height:9.4px;background:#fff;border:0.8px solid #ebebeb;border-radius:1px;"></div><div class="a" style="left:89.0px;top:329.56px;font-size:5.6px;line-height:5.6px;color:#333;font-weight:normal;-webkit-text-stroke:0.06px #333;">0</div><div class="a" style="left:118.4px;top:330.79px;font-size:4.3px;line-height:4.3px;color:#8a8a8a;font-weight:normal;-webkit-text-stroke:0.06px #8a8a8a;">mm</div>
<div class="a" style="left:7.2px;top:340.16px;font-size:5.6px;line-height:5.6px;color:#2a2a2a;font-weight:normal;-webkit-text-stroke:0.06px #2a2a2a;">Bottom Z distance</div><div class="a" style="left:85.9px;top:337.5px;width:42.6px;height:9.4px;background:#fff;border:0.8px solid #ebebeb;border-radius:1px;"></div><div class="a" style="left:89.0px;top:340.16px;font-size:5.6px;line-height:5.6px;color:#333;font-weight:normal;-webkit-text-stroke:0.06px #333;">0.2</div><div class="a" style="left:118.4px;top:341.39px;font-size:4.3px;line-height:4.3px;color:#8a8a8a;font-weight:normal;-webkit-text-stroke:0.06px #8a8a8a;">mm</div>
<div class="a" style="left:7.2px;top:351.46px;font-size:5.6px;line-height:5.6px;color:#2a2a2a;font-weight:normal;-webkit-text-stroke:0.06px #2a2a2a;">Base pattern</div><div class="a" style="left:85.9px;top:348.8px;width:42.6px;height:9.4px;background:#fff;border:0.8px solid #ebebeb;border-radius:1px;"></div><div class="a" style="left:89.0px;top:351.46px;font-size:5.6px;line-height:5.6px;color:#333;font-weight:normal;-webkit-text-stroke:0.06px #333;">Default</div>
<div class="a" style="left:7.2px;top:361.96px;font-size:5.6px;line-height:5.6px;color:#2a2a2a;font-weight:normal;-webkit-text-stroke:0.06px #2a2a2a;">Base pattern spacing</div><div class="a" style="left:85.9px;top:359.3px;width:42.6px;height:9.4px;background:#fff;border:0.8px solid #ebebeb;border-radius:1px;"></div><div class="a" style="left:89.0px;top:361.96px;font-size:5.6px;line-height:5.6px;color:#333;font-weight:normal;-webkit-text-stroke:0.06px #333;">2.5</div><div class="a" style="left:118.4px;top:363.19px;font-size:4.3px;line-height:4.3px;color:#8a8a8a;font-weight:normal;-webkit-text-stroke:0.06px #8a8a8a;">mm</div>
<div class="a" style="left:7.2px;top:372.56px;font-size:5.6px;line-height:5.6px;color:#2a2a2a;font-weight:normal;-webkit-text-stroke:0.06px #2a2a2a;">Pattern angle</div><div class="a" style="left:85.9px;top:369.9px;width:42.6px;height:9.4px;background:#fff;border:0.8px solid #ebebeb;border-radius:1px;"></div><div class="a" style="left:89.0px;top:372.56px;font-size:5.6px;line-height:5.6px;color:#333;font-weight:normal;-webkit-text-stroke:0.06px #333;">0</div><div class="a" style="left:124.0px;top:372.64px;font-size:4.2px;line-height:4.2px;color:#888;font-weight:normal;-webkit-text-stroke:0.06px #888;">°</div>
<div class="a" style="left:7.2px;top:383.16px;font-size:5.6px;line-height:5.6px;color:#2a2a2a;font-weight:normal;-webkit-text-stroke:0.06px #2a2a2a;">Top interface layers</div><div class="a" style="left:85.9px;top:380.5px;width:42.6px;height:9.4px;background:#fff;border:0.8px solid #ebebeb;border-radius:1px;"></div><svg class="a" style="left:88.2px;top:384.28px" width="4.2" height="2.4" viewBox="-0.5 -0.5 4.2 2.4"><path d="M0 0L1.60 1.44L3.20 0" fill="none" stroke="#999" stroke-width="0.6"/></svg><div class="a" style="left:94.2px;top:383.16px;font-size:5.6px;line-height:5.6px;color:#333;font-weight:normal;-webkit-text-stroke:0.06px #333;">2</div><div class="a" style="left:113.4px;top:384.34px;font-size:4.4px;line-height:4.4px;color:#8a8a8a;font-weight:normal;-webkit-text-stroke:0.06px #8a8a8a;">layers</div>
<div class="a" style="left:7.2px;top:393.96px;font-size:5.6px;line-height:5.6px;color:#2a2a2a;font-weight:normal;-webkit-text-stroke:0.06px #2a2a2a;">Bottom interface layers</div><div class="a" style="left:85.9px;top:391.3px;width:42.6px;height:9.4px;background:#fff;border:0.8px solid #ebebeb;border-radius:1px;"></div><svg class="a" style="left:88.2px;top:395.08px" width="4.2" height="2.4" viewBox="-0.5 -0.5 4.2 2.4"><path d="M0 0L1.60 1.44L3.20 0" fill="none" stroke="#999" stroke-width="0.6"/></svg><div class="a" style="left:94.2px;top:393.96px;font-size:5.6px;line-height:5.6px;color:#333;font-weight:normal;-webkit-text-stroke:0.06px #333;">2</div><div class="a" style="left:113.4px;top:395.14px;font-size:4.4px;line-height:4.4px;color:#8a8a8a;font-weight:normal;-webkit-text-stroke:0.06px #8a8a8a;">layers</div>
<div class="a" style="left:7.2px;top:404.96px;font-size:5.6px;line-height:5.6px;color:#dc7a5c;font-weight:normal;-webkit-text-stroke:0.06px #dc7a5c;">Interface pattern</div>
<svg class="a" style="left:79.5px;top:404px" width="6" height="6" viewBox="0 0 6 6"><path d="M1.2 3.4A2 2 0 1 0 2 1.6" fill="none" stroke="#e98a73" stroke-width="0.7"/><path d="M0.6 1.2L2.2 1.4L2 3" fill="none" stroke="#e98a73" stroke-width="0.6"/></svg>
<div class="a" style="left:85.9px;top:402.6px;width:42.6px;height:8.8px;background:#fff;border:0.8px solid #e6e6e6;border-radius:1px;"></div>
<svg class="a" style="left:86.6px;top:403.3px" width="7" height="7" viewBox="0 0 7 7"><rect x="0" y="0" width="7" height="7" fill="#777"/><rect x="1" y="1" width="5" height="5" fill="#ddd"/><rect x="2" y="2" width="3" height="3" fill="#777"/><rect x="3" y="3" width="1" height="1" fill="#ddd"/></svg>
<div class="a" style="left:93.8px;top:404.96px;font-size:5.6px;line-height:5.6px;color:#333;font-weight:normal;-webkit-text-stroke:0.06px #333;">Concentric</div>
<div class="a" style="left:7.2px;top:415.56px;font-size:5.6px;line-height:5.6px;color:#dc7a5c;font-weight:normal;-webkit-text-stroke:0.06px #dc7a5c;">Top interface spacing</div><svg class="a" style="left:79.5px;top:414.6px" width="6" height="6" viewBox="0 0 6 6"><path d="M1.2 3.4A2 2 0 1 0 2 1.6" fill="none" stroke="#e98a73" stroke-width="0.7"/><path d="M0.6 1.2L2.2 1.4L2 3" fill="none" stroke="#e98a73" stroke-width="0.6"/></svg><div class="a" style="left:85.9px;top:412.9px;width:42.6px;height:9.4px;background:#fff;border:0.8px solid #ebebeb;border-radius:1px;"></div><div class="a" style="left:89.0px;top:415.56px;font-size:5.6px;line-height:5.6px;color:#333;font-weight:normal;-webkit-text-stroke:0.06px #333;">0</div><div class="a" style="left:118.4px;top:416.79px;font-size:4.3px;line-height:4.3px;color:#8a8a8a;font-weight:normal;-webkit-text-stroke:0.06px #8a8a8a;">mm</div>
<div class="a" style="left:7.2px;top:426.26px;font-size:5.6px;line-height:5.6px;color:#2a2a2a;font-weight:normal;-webkit-text-stroke:0.06px #2a2a2a;">Normal Support expansion</div><div class="a" style="left:85.9px;top:423.6px;width:42.6px;height:9.4px;background:#fff;border:0.8px solid #ebebeb;border-radius:1px;"></div><div class="a" style="left:89.0px;top:426.26px;font-size:5.6px;line-height:5.6px;color:#333;font-weight:normal;-webkit-text-stroke:0.06px #333;">0</div><div class="a" style="left:118.4px;top:427.49px;font-size:4.3px;line-height:4.3px;color:#8a8a8a;font-weight:normal;-webkit-text-stroke:0.06px #8a8a8a;">mm</div>
<div class="a" style="left:7.2px;top:436.96px;font-size:5.6px;line-height:5.6px;color:#2a2a2a;font-weight:normal;-webkit-text-stroke:0.06px #2a2a2a;">Support/object xy distance</div><div class="a" style="left:85.9px;top:434.3px;width:42.6px;height:9.4px;background:#fff;border:0.8px solid #ebebeb;border-radius:1px;"></div><div class="a" style="left:89.0px;top:436.96px;font-size:5.6px;line-height:5.6px;color:#333;font-weight:normal;-webkit-text-stroke:0.06px #333;">0.35</div><div class="a" style="left:118.4px;top:438.19px;font-size:4.3px;line-height:4.3px;color:#8a8a8a;font-weight:normal;-webkit-text-stroke:0.06px #8a8a8a;">mm</div>
<div class="a" style="left:7.2px;top:447.76px;font-size:5.6px;line-height:5.6px;color:#2a2a2a;font-weight:normal;-webkit-text-stroke:0.06px #2a2a2a;">Max bridge length</div><div class="a" style="left:85.9px;top:445.1px;width:42.6px;height:9.4px;background:#fff;border:0.8px solid #ebebeb;border-radius:1px;"></div><div class="a" style="left:89.0px;top:447.76px;font-size:5.6px;line-height:5.6px;color:#333;font-weight:normal;-webkit-text-stroke:0.06px #333;">10</div><div class="a" style="left:118.4px;top:448.99px;font-size:4.3px;line-height:4.3px;color:#8a8a8a;font-weight:normal;-webkit-text-stroke:0.06px #8a8a8a;">mm</div>
<div class="a" style="left:7.2px;top:458.26px;font-size:5.6px;line-height:5.6px;color:#dc7a5c;font-weight:normal;-webkit-text-stroke:0.06px #dc7a5c;">Independent support layer</div>
<div class="a" style="left:0.0px;top:461.0px;width:690.0px;height:9.0px;background:linear-gradient(#2a2b2b, #3a3b3b);"></div>
<div class="a" style="left:0.0px;top:461.0px;width:150.0px;height:9.0px;background:linear-gradient(#2e2e2e, #4a4a4a);"></div>
<div class="a" style="left:262.0px;top:461.0px;width:308.5px;height:9.0px;background:#253329;"></div>
<div class="a" style="left:261.7px;top:459.0px;width:308.7px;height:2.2px;background:#f4f6f4;border-radius:1px"></div>
<div class="a" style="left:574.8px;top:459.6px;width:10.8px;height:1.2px;background:#cfd3d0;"></div>
<div class="a" style="left:685px;top:462px;width:8px;height:9px;border-radius:50% 50% 0 0;background:#e8622c"></div>
<div class="a" style="left:536.0px;top:5.2px;width:121.2px;height:153.4px;background:rgba(30,30,30,0.93);"></div>
<div class="a" style="left:582.8px;top:7.4px;width:70.7px;height:7.2px;background:rgba(22,22,22,0.95);border:0.6px solid #3c3c3c;border-radius:1px"></div>
<svg class="a" style="left:540.8px;top:8.6px" width="5" height="4" viewBox="0 0 5 4"><path d="M0.6 3.2L2.5 1.2L4.4 3.2" fill="none" stroke="#bbb" stroke-width="0.7"/></svg>
<div class="a" style="left:549.7px;top:9.55px;font-size:5px;line-height:5px;color:#f4f4f4;font-weight:bold;-webkit-text-stroke:0.05px #f4f4f4;transform:scaleX(0.88);transform-origin:0 0">Color Scheme</div>
<svg class="a" style="left:584.6px;top:9.8px" width="4" height="3" viewBox="0 0 4 3"><path d="M0.4 0.6L2 2.2L3.6 0.6" fill="none" stroke="#ccc" stroke-width="0.6"/></svg>
<div class="a" style="left:591.5px;top:9.90px;font-size:4.7px;line-height:4.7px;color:#dddddd;font-weight:normal;-webkit-text-stroke:0.05px #dddddd;">Filament</div>
<div class="a" style="left:539.9px;top:18.49px;font-size:4.5px;line-height:4.5px;color:#f2f2f2;font-weight:bold;-webkit-text-stroke:0.05px #f2f2f2;">Filament</div>
<div class="a" style="left:566.0px;top:18.49px;font-size:4.5px;line-height:4.5px;color:#f2f2f2;font-weight:bold;-webkit-text-stroke:0.05px #f2f2f2;">Model</div>
<div class="a" style="left:596.7px;top:18.49px;font-size:4.5px;line-height:4.5px;color:#f2f2f2;font-weight:bold;-webkit-text-stroke:0.05px #f2f2f2;">Flushed</div>
<div class="a" style="left:627.2px;top:18.49px;font-size:4.5px;line-height:4.5px;color:#f2f2f2;font-weight:bold;-webkit-text-stroke:0.05px #f2f2f2;">Total</div>
<div class="a" style="left:538.5px;top:22.8px;width:117.0px;height:0.9px;background:#555555;"></div>
<div class="a" style="left:540.4px;top:26.0px;width:3.5px;height:3.6px;background:#17a54a;border:0.5px solid #7fd39a"></div>
<div class="a" style="left:547.4px;top:26.45px;font-size:4.8px;line-height:4.8px;color:#e6e6e6;font-weight:normal;-webkit-text-stroke:0.05px #e6e6e6;">1</div>
<div class="a" style="left:540.4px;top:38.8px;width:3.5px;height:3.5px;background:#f4f4f4;"></div>
<div class="a" style="left:547.4px;top:39.25px;font-size:4.8px;line-height:4.8px;color:#e6e6e6;font-weight:normal;-webkit-text-stroke:0.05px #e6e6e6;">2</div>
<div class="a" style="left:566.0px;top:26.50px;font-size:4.7px;line-height:4.7px;color:#e6e6e6;font-weight:normal;-webkit-text-stroke:0.05px #e6e6e6;">0.69 m</div>
<div class="a" style="left:566.0px;top:32.30px;font-size:4.7px;line-height:4.7px;color:#e6e6e6;font-weight:normal;-webkit-text-stroke:0.05px #e6e6e6;">2.09 g</div>
<div class="a" style="left:596.5px;top:26.50px;font-size:4.7px;line-height:4.7px;color:#e6e6e6;font-weight:normal;-webkit-text-stroke:0.05px #e6e6e6;">0.01 m</div>
<div class="a" style="left:596.5px;top:32.30px;font-size:4.7px;line-height:4.7px;color:#e6e6e6;font-weight:normal;-webkit-text-stroke:0.05px #e6e6e6;">0.02 g</div>
<div class="a" style="left:627.2px;top:26.50px;font-size:4.7px;line-height:4.7px;color:#e6e6e6;font-weight:normal;-webkit-text-stroke:0.05px #e6e6e6;">0.70 m</div>
<div class="a" style="left:627.2px;top:32.30px;font-size:4.7px;line-height:4.7px;color:#e6e6e6;font-weight:normal;-webkit-text-stroke:0.05px #e6e6e6;">2.11 g</div>
<div class="a" style="left:566.0px;top:39.30px;font-size:4.7px;line-height:4.7px;color:#e6e6e6;font-weight:normal;-webkit-text-stroke:0.05px #e6e6e6;">0.01 m</div>
<div class="a" style="left:566.0px;top:44.50px;font-size:4.7px;line-height:4.7px;color:#e6e6e6;font-weight:normal;-webkit-text-stroke:0.05px #e6e6e6;">0.04 g</div>
<div class="a" style="left:596.5px;top:39.30px;font-size:4.7px;line-height:4.7px;color:#e6e6e6;font-weight:normal;-webkit-text-stroke:0.05px #e6e6e6;">0.00 m</div>
<div class="a" style="left:596.5px;top:44.50px;font-size:4.7px;line-height:4.7px;color:#e6e6e6;font-weight:normal;-webkit-text-stroke:0.05px #e6e6e6;">0.01 g</div>
<div class="a" style="left:627.2px;top:39.30px;font-size:4.7px;line-height:4.7px;color:#e6e6e6;font-weight:normal;-webkit-text-stroke:0.05px #e6e6e6;">0.02 m</div>
<div class="a" style="left:627.2px;top:44.50px;font-size:4.7px;line-height:4.7px;color:#e6e6e6;font-weight:normal;-webkit-text-stroke:0.05px #e6e6e6;">0.05 g</div>
<div class="a" style="left:538.5px;top:50.0px;width:117.0px;height:0.9px;background:#555555;"></div>
<div class="a" style="left:540.3px;top:53.60px;font-size:4.7px;line-height:4.7px;color:#e6e6e6;font-weight:normal;-webkit-text-stroke:0.05px #e6e6e6;">Total</div>
<div class="a" style="left:566.0px;top:53.60px;font-size:4.7px;line-height:4.7px;color:#e6e6e6;font-weight:normal;-webkit-text-stroke:0.05px #e6e6e6;">0.70 m</div>
<div class="a" style="left:566.0px;top:59.20px;font-size:4.7px;line-height:4.7px;color:#e6e6e6;font-weight:normal;-webkit-text-stroke:0.05px #e6e6e6;">2.13 g</div>
<div class="a" style="left:596.5px;top:53.60px;font-size:4.7px;line-height:4.7px;color:#e6e6e6;font-weight:normal;-webkit-text-stroke:0.05px #e6e6e6;">0.01 m</div>
<div class="a" style="left:596.5px;top:59.20px;font-size:4.7px;line-height:4.7px;color:#e6e6e6;font-weight:normal;-webkit-text-stroke:0.05px #e6e6e6;">0.03 g</div>
<div class="a" style="left:627.2px;top:53.60px;font-size:4.7px;line-height:4.7px;color:#e6e6e6;font-weight:normal;-webkit-text-stroke:0.05px #e6e6e6;">0.71 m</div>
<div class="a" style="left:627.2px;top:59.20px;font-size:4.7px;line-height:4.7px;color:#e6e6e6;font-weight:normal;-webkit-text-stroke:0.05px #e6e6e6;">2.16 g</div>
<div class="a" style="left:540.3px;top:66.66px;font-size:4.58px;line-height:4.58px;color:#e6e6e6;font-weight:normal;-webkit-text-stroke:0.05px #e6e6e6;">Filament change times:</div>
<div class="a" style="left:591.3px;top:66.60px;font-size:4.7px;line-height:4.7px;color:#e6e6e6;font-weight:normal;-webkit-text-stroke:0.05px #e6e6e6;">4</div>
<div class="a" style="left:540.3px;top:73.30px;font-size:4.7px;line-height:4.7px;color:#e6e6e6;font-weight:normal;-webkit-text-stroke:0.05px #e6e6e6;">Cost:</div>
<div class="a" style="left:552.8px;top:73.30px;font-size:4.7px;line-height:4.7px;color:#e6e6e6;font-weight:normal;-webkit-text-stroke:0.05px #e6e6e6;">0.06</div>
<div class="a" style="left:540.3px;top:83.20px;font-size:4.48px;line-height:4.48px;color:#f6f6f6;font-weight:bold;-webkit-text-stroke:0.05px #f6f6f6;">Time Estimation</div>
<div class="a" style="left:538.5px;top:88.2px;width:117.0px;height:0.9px;background:#555555;"></div>
<div class="a" style="left:540.3px;top:91.90px;font-size:4.7px;line-height:4.7px;color:#e6e6e6;font-weight:normal;-webkit-text-stroke:0.05px #e6e6e6;">Prepare time:</div>
<div class="a" style="left:584.5px;top:91.90px;font-size:4.7px;line-height:4.7px;color:#e6e6e6;font-weight:normal;-webkit-text-stroke:0.05px #e6e6e6;">6m58s</div>
<div class="a" style="left:540.3px;top:98.60px;font-size:4.7px;line-height:4.7px;color:#e6e6e6;font-weight:normal;-webkit-text-stroke:0.05px #e6e6e6;">Model printing time:</div>
<div class="a" style="left:584.5px;top:98.60px;font-size:4.7px;line-height:4.7px;color:#e6e6e6;font-weight:normal;-webkit-text-stroke:0.05px #e6e6e6;">13m16s</div>
<div class="a" style="left:540.3px;top:105.10px;font-size:4.7px;line-height:4.7px;color:#e6e6e6;font-weight:normal;-webkit-text-stroke:0.05px #e6e6e6;">Total time:</div>
<div class="a" style="left:584.5px;top:105.10px;font-size:4.7px;line-height:4.7px;color:#e6e6e6;font-weight:normal;-webkit-text-stroke:0.05px #e6e6e6;">20m15s</div>
<div class="a" style="left:536.0px;top:110.0px;width:121.2px;height:8.2px;background:rgba(18,18,18,0.6);"></div>
<div class="a" style="left:540.3px;top:113.39px;font-size:4.5px;line-height:4.5px;color:#f6f6f6;font-weight:bold;-webkit-text-stroke:0.05px #f6f6f6;">Options</div>
<div class="a" style="left:635.3px;top:113.39px;font-size:4.5px;line-height:4.5px;color:#f6f6f6;font-weight:bold;-webkit-text-stroke:0.05px #f6f6f6;">Display</div>
<div class="a" style="left:536.0px;top:118.2px;width:121.2px;height:1.6px;background:#505050;"></div>
<div class="a" style="left:540.0px;top:121.1px;width:4.0px;height:3.5px;background:#5454a8;"></div>
<div class="a" style="left:546.4px;top:121.60px;font-size:4.7px;line-height:4.7px;color:#eeeeee;font-weight:normal;-webkit-text-stroke:0.05px #eeeeee;">Travel</div>
<div class="a" style="left:643.6px;top:120.4px;width:5.1px;height:5.0px;background:#5a5a5a;border-radius:0.5px"></div>
<div class="a" style="left:540.0px;top:128.7px;width:4.0px;height:3.5px;background:#c43ec4;"></div>
<div class="a" style="left:546.4px;top:129.20px;font-size:4.7px;line-height:4.7px;color:#eeeeee;font-weight:normal;-webkit-text-stroke:0.05px #eeeeee;">Retract</div>
<div class="a" style="left:643.6px;top:128.0px;width:5.1px;height:5.0px;background:#5a5a5a;border-radius:0.5px"></div>
<div class="a" style="left:540.0px;top:136.3px;width:4.0px;height:3.5px;background:#4fb0d4;"></div>
<div class="a" style="left:546.4px;top:136.80px;font-size:4.7px;line-height:4.7px;color:#eeeeee;font-weight:normal;-webkit-text-stroke:0.05px #eeeeee;">Unretract</div>
<div class="a" style="left:643.6px;top:135.6px;width:5.1px;height:5.0px;background:#5a5a5a;border-radius:0.5px"></div>
<div class="a" style="left:540.0px;top:144.0px;width:4.0px;height:3.5px;background:#e4e41c;"></div>
<div class="a" style="left:546.4px;top:144.50px;font-size:4.7px;line-height:4.7px;color:#eeeeee;font-weight:normal;-webkit-text-stroke:0.05px #eeeeee;">Wipe</div>
<div class="a" style="left:643.6px;top:143.3px;width:5.1px;height:5.0px;background:#5a5a5a;border-radius:0.5px"></div>
<div class="a" style="left:540.0px;top:151.6px;width:4.0px;height:3.5px;background:#f2f2f2;"></div>
<div class="a" style="left:546.4px;top:152.10px;font-size:4.7px;line-height:4.7px;color:#eeeeee;font-weight:normal;-webkit-text-stroke:0.05px #eeeeee;">Seams</div>
<div class="a" style="left:643.6px;top:150.9px;width:5.1px;height:5.0px;background:#5a5a5a;border-radius:0.5px"></div>
<svg class="a" style="left:643.6px;top:150.9px" width="5.1" height="5" viewBox="0 0 5 5"><rect width="5" height="5" fill="#51705a"/><path d="M1 2.6L2.1 3.7L4.1 1.3" fill="none" stroke="#9fd5ae" stroke-width="0.6"/></svg>
<svg class="a" style="left:580px;top:60px" width="30" height="20" viewBox="580 60 30 20"><path d="M586 67.2 C588 70.5 592 73.2 598 73.5 C602 73.6 603 70.5 601 68 C599 66 595 65.6 590.5 65.8" fill="none" stroke="#0a0a0a" stroke-width="0.9"/></svg>
<div class="a" style="left:685.5px;top:62.0px;width:6.5px;height:356.0px;background:#ffffff;border:1.1px solid #1fae4e;border-radius:3px"></div>
<div class="a" style="left:684.6px;top:60.6px;width:8px;height:8px;border-radius:50%;background:#1fae4e;border:1.2px solid #ffffff;box-shadow:0 0 0 0.8px #1fae4e"></div>
<div class="a" style="left:685px;top:411.6px;width:8px;height:8px;border-radius:50%;background:#1fae4e;border:1.2px solid #ffffff;box-shadow:0 0 0 0.8px #1fae4e"></div>
<div class="a" style="left:666.8px;top:52.8px;width:15.9px;height:12.1px;background:#ffffff;border-radius:1px"></div>
<div class="a" style="left:671.6px;top:55.00px;font-size:4.9px;line-height:4.9px;color:#2e9a58;font-weight:normal;-webkit-text-stroke:0.05px #2e9a58;">100</div>
<div class="a" style="left:668.6px;top:60.80px;font-size:4.9px;line-height:4.9px;color:#2e9a58;font-weight:normal;-webkit-text-stroke:0.05px #2e9a58;">20.00</div>
<div class="a" style="left:667.9px;top:416.0px;width:14.1px;height:11.6px;background:#ffffff;border-radius:1px"></div>
<div class="a" style="left:673.6px;top:418.10px;font-size:4.5px;line-height:4.5px;color:#2e9a58;font-weight:normal;-webkit-text-stroke:0.05px #2e9a58;">1</div>
<div class="a" style="left:670.0px;top:423.60px;font-size:4.5px;line-height:4.5px;color:#2e9a58;font-weight:normal;-webkit-text-stroke:0.05px #2e9a58;">0.20</div>
<div class="a" style="left:683.5px;top:424.95px;font-size:5px;line-height:5px;color:#aaaaaa;font-weight:normal;-webkit-text-stroke:0.05px #aaaaaa;">at</div>
<div class="a" style="left:667.8px;top:431.15px;font-size:5px;line-height:5px;color:#9a9a9a;font-weight:normal;-webkit-text-stroke:0.05px #9a9a9a;">Go to Se</div>
<svg class="a" style="left:149px;top:4.9px" width="45" height="49.5" viewBox="149 4.9 45 49.5">
<rect x="149" y="4.9" width="44.6" height="49.2" fill="#8c8c8c" rx="0.8"/>
<rect x="150.3" y="6.7" width="42.1" height="40.9" fill="#7d7f82" stroke="#5a8fc0" stroke-width="1.4"/>
<g stroke="#a9adb0" stroke-width="0.5" opacity="0.7"><path d="M151 14 L192 8.5"/><path d="M151 29 L160 33 L192 48"/><path d="M151 42 L192 33.5"/></g>
<text x="156.8" y="17.6" font-family="Liberation Sans" font-size="5" fill="#f0f0f0">1</text>
<path d="M160.2 23.6 L174.8 13.1 L181.9 17.8 L167.2 28.3 Z" fill="#17b24c"/>
<path d="M160.2 23.6 L167.2 28.3 L167.2 30 L160.2 25.3 Z" fill="#0b7a2e"/>
<path d="M167.2 28.3 L181.9 17.8 L181.9 19.5 L174.8 24.6 L174.8 34.2 L167.2 30 Z" fill="#0d8a35"/>
<path d="M167.2 30 L174.8 24.6 L174.8 34.2 L170 37.5 L167.2 33 Z" fill="#0a6e2a"/>
<path d="M160.2 35.9 L166 31.3 L173.1 35.9 L166 41.2 Z" fill="#17b24c"/>
<path d="M160.2 35.9 L166 41.2 L166 42.8 L160.2 37.5 Z" fill="#0b7a2e"/>
<path d="M166 41.2 L173.1 35.9 L174.8 34.2 L174.8 36.2 L166 42.8 Z" fill="#0a6e2a"/>
</svg>
</body></html>
